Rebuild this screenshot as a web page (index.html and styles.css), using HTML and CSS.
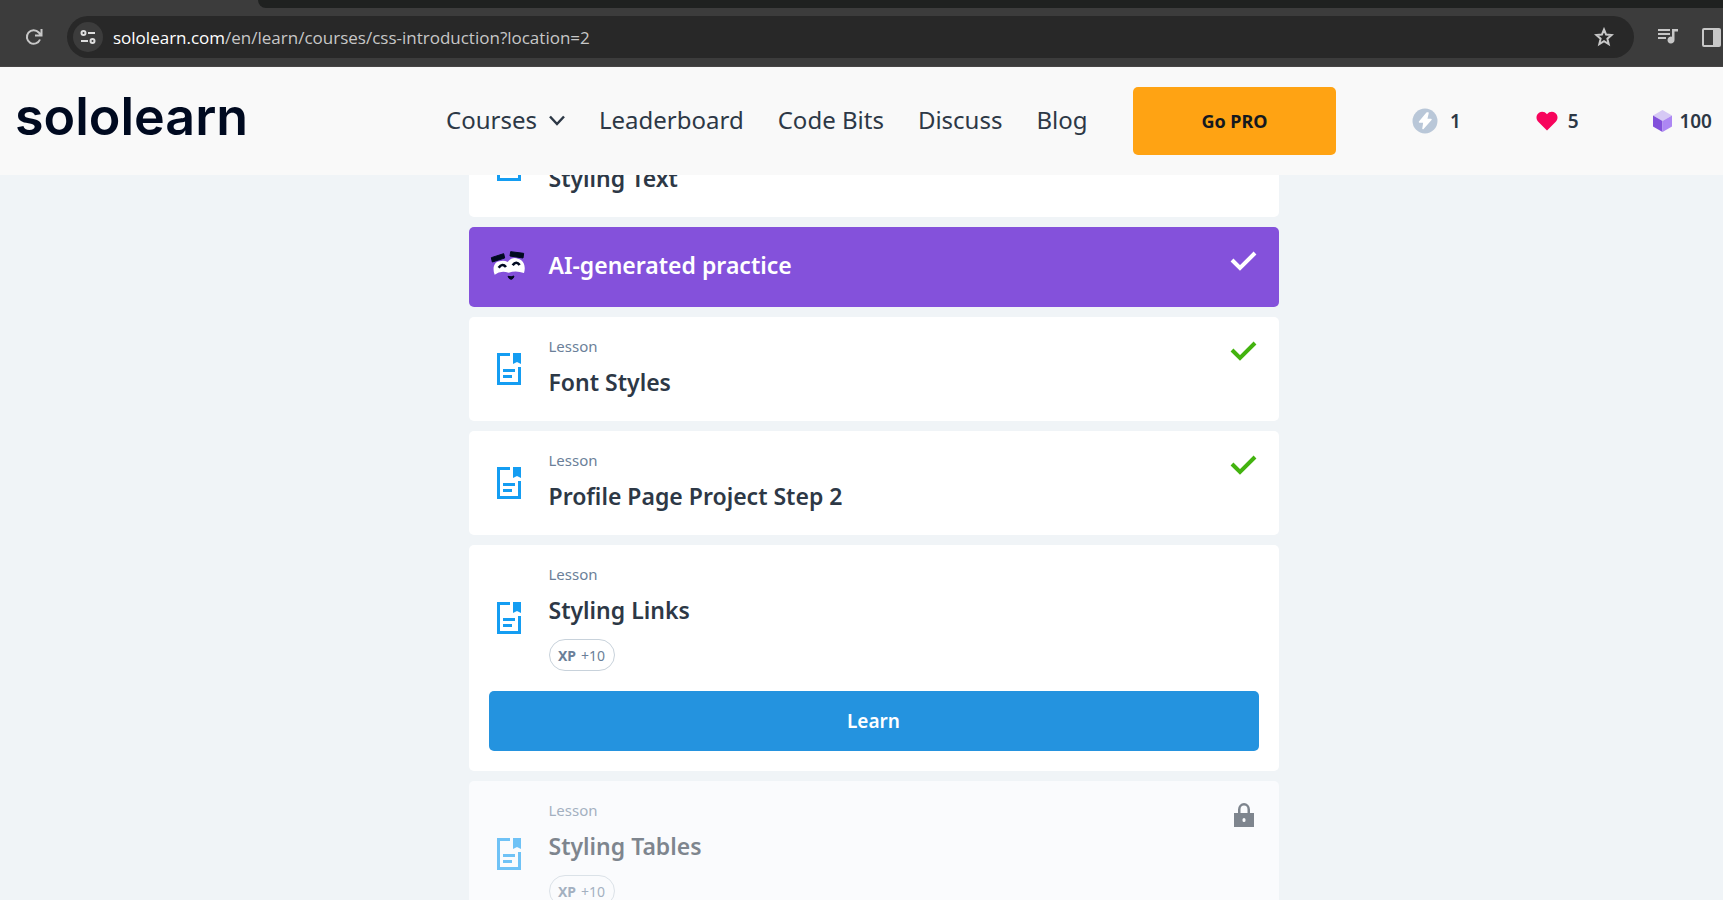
FILE: index.html
```html
<!DOCTYPE html>
<html lang="en">
<head>
<meta charset="utf-8">
<meta name="viewport" content="width=device-width, initial-scale=1">
<title>Introduction to CSS</title>
<link rel="stylesheet" href="styles.css">
</head>
<body>
<svg class="defs" aria-hidden="true">
  <symbol id="doc" viewBox="0 0 24 32">
    <path fill="currentColor" d="M0 0h13v3H3v26h18V14h3v18H0zM16 0h8v11l-4-2-4 2zM6 16h12v3H6zM6 22h9v3H6z"/>
  </symbol>
  <symbol id="check" viewBox="0 0 30 30">
    <path fill="none" stroke="currentColor" stroke-width="4" d="M3 13l8 8L26 6"/>
  </symbol>
  <symbol id="lock" viewBox="0 0 30 30">
    <path fill="currentColor" fill-rule="evenodd" d="M5 12h4V8.500a6 6.500 0 0 1 12 0V12h4v14H5zM11.500 12h7V8.500a3.500 4 0 0 0-7 0zM15 17a1.500 1.500 0 0 0-1.500 1.500v1a1.500 1.500 0 0 0 3 0v-1A1.500 1.500 0 0 0 15 17z"/>
  </symbol>
</svg>

<div class="browser">
  <div class="tabstrip"></div>
  <div class="toolbar">
    <button class="tool" type="button" aria-label="Reload">
      <svg width="18" height="18" viewBox="0 0 18 18" fill="none" stroke="#c7c7c7" stroke-width="2"><path d="M15 11.500A6.800 6.800 0 1 1 13.800 4.500L16 7M16.500 1v6.500H10"/></svg>
    </button>
    <div class="omnibox">
      <button class="site-info" type="button" aria-label="Site information">
        <svg width="16" height="16" viewBox="0 0 16 16" fill="none" stroke="#dedede" stroke-width="2"><circle cx="3.500" cy="4" r="2"/><path d="M8 4h7M1 12h7"/><circle cx="12.500" cy="12" r="2"/></svg>
      </button>
      <a class="url" href="#"><span class="host">sololearn.com</span>/en/learn/courses/css-introduction?location=2</a>
      <button class="tool star" type="button" aria-label="Bookmark">
        <svg width="20" height="20" viewBox="0 0 20 20" fill="none" stroke="#c7c7c7" stroke-width="2"><path d="M10 2.500l2.100 5.100 5.500.5-4.200 3.600 1.300 5.400L10 14.200l-4.700 2.900 1.300-5.400L2.400 8.100l5.500-.5z"/></svg>
      </button>
    </div>
    <button class="tool" type="button" aria-label="Media controls">
      <svg width="20" height="20" viewBox="0 0 20 20" fill="#c7c7c7"><path d="M0 2h12v2H0zM0 6h12v2H0zM0 10h8v2H0zM14 2h6v2.500h-3.500V13a3.500 3.500 0 1 1-2.500-3.300z"/></svg>
    </button>
    <button class="tool" type="button" aria-label="Side panel">
      <svg width="19" height="19" viewBox="0 0 19 19"><rect x="1" y="1" width="17" height="17" rx="1" fill="none" stroke="#c7c7c7" stroke-width="2"/><path fill="#c7c7c7" d="M11 1h7v17h-7z"/></svg>
    </button>
  </div>
</div>

<header class="header">
  <a class="logo" href="#">sololearn</a>
  <nav class="nav">
    <a href="#">Courses <svg width="16" height="11" viewBox="0 0 16 11" fill="none" stroke="currentColor" stroke-width="2.500"><path d="M1 1.500l7 7.500 7-7.500"/></svg></a>
    <a href="#">Leaderboard</a>
    <a href="#">Code Bits</a>
    <a href="#">Discuss</a>
    <a href="#">Blog</a>
  </nav>
  <button class="pro" type="button">Go PRO</button>
  <div class="stats">
    <span class="stat streak"><svg width="26" height="26" viewBox="0 0 26 26"><circle cx="13" cy="13" r="12.500" fill="#b9c7d8"/><path fill="#fff" stroke="#fff" stroke-width="1.500" stroke-linejoin="round" d="M15 5L7.500 14H12L11 20.500 19 11.500h-4.500L16 5z"/></svg>1</span>
    <span class="stat hearts"><svg width="22" height="20" viewBox="0 0 22 20"><path fill="#f7045c" d="M11 19.500L2 10.500C-.5 7.500.3 3.500 3 1.700 5.500 0 9 .6 11 3.200 13 .6 16.500 0 19 1.700c2.700 1.800 3.500 5.800 1 8.800z"/></svg>5</span>
    <span class="stat bits"><svg width="19" height="22" viewBox="0 0 19 22"><path fill="#d6c9f5" d="M9.500 0L19 5.500 9.500 11 0 5.500z"/><path fill="#8251db" d="M0 5.500L9.500 11v11L0 16.500z"/><path fill="#ad87f3" d="M19 5.500L9.500 11v11l9.500-5.500z"/></svg>100</span>
  </div>
</header>

<main class="content">
  <ul class="lessons">
    <li class="card">
      <div class="row">
        <span class="icon"><svg width="24" height="32"><use href="#doc"/></svg></span>
        <div class="info"><span class="kind">Lesson</span><h2 class="title">Styling Text</h2></div>
        <svg class="status" width="30" height="30"><use href="#check"/></svg>
      </div>
    </li>
    <li class="card practice">
      <div class="row">
        <span class="icon"><svg width="40" height="40" viewBox="27 21 120 120"><path fill="#fff" d="M44 104C36 84 43 66 58 64q14-4 25 2Q96 50 114 56c18 4 24 24 18 43Q108 90 86 98 62 90 44 104z"/><path fill="#000a20" stroke="#000a20" stroke-width="3" stroke-linejoin="round" d="M34 53l37-12 3 13-37 12zM92 35l39 5-2 14-39-6zM84 109q10 3 18-1-2 9-8 10-7 0-10-9z"/><path fill="none" stroke="#000a20" stroke-width="8" d="M56 83q11-15 22-2M98 76q11-15 21-1"/></svg></span>
        <div class="info"><h2 class="title">AI-generated practice</h2></div>
        <svg class="status" width="30" height="30"><use href="#check"/></svg>
      </div>
    </li>
    <li class="card">
      <div class="row">
        <span class="icon"><svg width="24" height="32"><use href="#doc"/></svg></span>
        <div class="info"><span class="kind">Lesson</span><h2 class="title">Font Styles</h2></div>
        <svg class="status" width="30" height="30"><use href="#check"/></svg>
      </div>
    </li>
    <li class="card">
      <div class="row">
        <span class="icon"><svg width="24" height="32"><use href="#doc"/></svg></span>
        <div class="info"><span class="kind">Lesson</span><h2 class="title">Profile Page Project Step 2</h2></div>
        <svg class="status" width="30" height="30"><use href="#check"/></svg>
      </div>
    </li>
    <li class="card">
      <div class="row">
        <span class="icon"><svg width="24" height="32"><use href="#doc"/></svg></span>
        <div class="info"><span class="kind">Lesson</span><h2 class="title">Styling Links</h2><span class="xp"><b>XP</b> +10</span></div>
      </div>
      <button class="learn" type="button">Learn</button>
    </li>
    <li class="card locked">
      <div class="row">
        <span class="icon"><svg width="24" height="32"><use href="#doc"/></svg></span>
        <div class="info"><span class="kind">Lesson</span><h2 class="title">Styling Tables</h2><span class="xp"><b>XP</b> +10</span></div>
        <svg class="status" width="30" height="30"><use href="#lock"/></svg>
      </div>
    </li>
  </ul>
</main>
</body>
</html>
```
FILE: styles.css
```css
* { box-sizing: border-box; }

body {
  margin: 0;
  height: 100vh;
  display: flex;
  flex-direction: column;
  overflow: hidden;
  background: #f0f4f7;
  color: #2d3846;
  font-family: "Noto Sans", "Open Sans", sans-serif;
}

button { border: 0; padding: 0; font-family: inherit; cursor: pointer; }
a { color: inherit; text-decoration: none; }
svg { flex: none; }
.defs { position: absolute; width: 0; height: 0; }

/* Browser bar */
.browser { flex: none; background: #3c3c3c; border-bottom: 1px solid #474545; }
.tabstrip { height: 8px; margin-left: 258px; background: #1f2120; border-bottom-left-radius: 16px; }
.toolbar { display: flex; align-items: center; gap: 24px; padding: 8px 2px 8px 25px; }
.tool { display: flex; background: none; }
.omnibox {
  flex: 1;
  display: flex;
  align-items: center;
  height: 42px;
  padding: 0 20px 0 6px;
  border-radius: 21px;
  background: #282828;
}
.site-info {
  display: flex;
  align-items: center;
  justify-content: center;
  width: 30px;
  height: 30px;
  border-radius: 50%;
  background: #3c3c3c;
}
.url {
  margin-left: 10px;
  color: #c7c7c7;
  font-family: "Open Sans", sans-serif;
  font-size: 17px;
  white-space: nowrap;
}
.host { color: #fff; }
.star { margin-left: auto; }

/* Site header */
.header {
  flex: none;
  display: flex;
  align-items: center;
  height: 108px;
  padding: 0 11px 0 15px;
  background: #f9f9f9;
}
.logo {
  width: 231px;
  padding-bottom: 8px;
  color: #000a20;
  font-family: Inter, sans-serif;
  font-size: 52px;
  font-weight: 600;
  line-height: 60px;
}
.nav { display: flex; gap: 34px; margin-left: 200px; font-size: 24px; line-height: 36px; padding-bottom: 2px; white-space: nowrap; }
.nav a { display: flex; align-items: center; gap: 12px; }
.pro {
  width: 203px;
  height: 68px;
  margin-left: auto;
  border-radius: 5px;
  background: #ffa313;
  color: #14181f;
  font-size: 18px;
  font-weight: 700;
}
.stats {
  width: 300px;
  display: flex;
  justify-content: space-between;
  margin-left: 76px;
  font-size: 19px;
  font-weight: 600;
}
.stat { display: flex; align-items: center; gap: 10px; }
.streak { gap: 12px; }
.bits { gap: 7px; }

/* Lesson list */
.content { flex: 1; min-height: 0; padding-left: 24px; overflow: hidden; }
.lessons {
  display: flex;
  flex-direction: column;
  gap: 10px;
  max-width: 810px;
  margin: -62px auto 0;
  padding: 0;
  list-style: none;
}
.card { padding: 20px; border-radius: 5px; background: #fff; }
.row { display: flex; align-items: center; gap: 20px; }
.icon { display: flex; justify-content: center; width: 40px; color: #149df2; }
.info { flex: 1; }
.kind { display: block; color: #6b7f99; font-size: 15px; line-height: 18px; }
.title { margin: 8px 0 0; font-size: 23px; font-weight: 600; line-height: 38px; }
.status { align-self: flex-start; color: #43b30f; }
.xp {
  display: flex;
  align-items: center;
  justify-content: center;
  gap: 5px;
  width: 66px;
  height: 32px;
  margin-top: 10px;
  border: 1px solid #c8d2db;
  border-radius: 16px;
  color: #6b7f99;
  font-size: 14px;
}
.learn {
  display: block;
  width: 100%;
  height: 60px;
  margin-top: 20px;
  border-radius: 5px;
  background: #2493df;
  color: #fff;
  font-size: 19px;
  font-weight: 600;
}
.practice { background: #8451db; color: #fff; }
.practice .title { margin: 0; padding-bottom: 4px; line-height: 36px; }
.practice .status { color: #fff; }
.locked { background: #fafbfd; }
.locked .row > * { opacity: 0.6; }
.locked .status { color: #2d3846; }
```
